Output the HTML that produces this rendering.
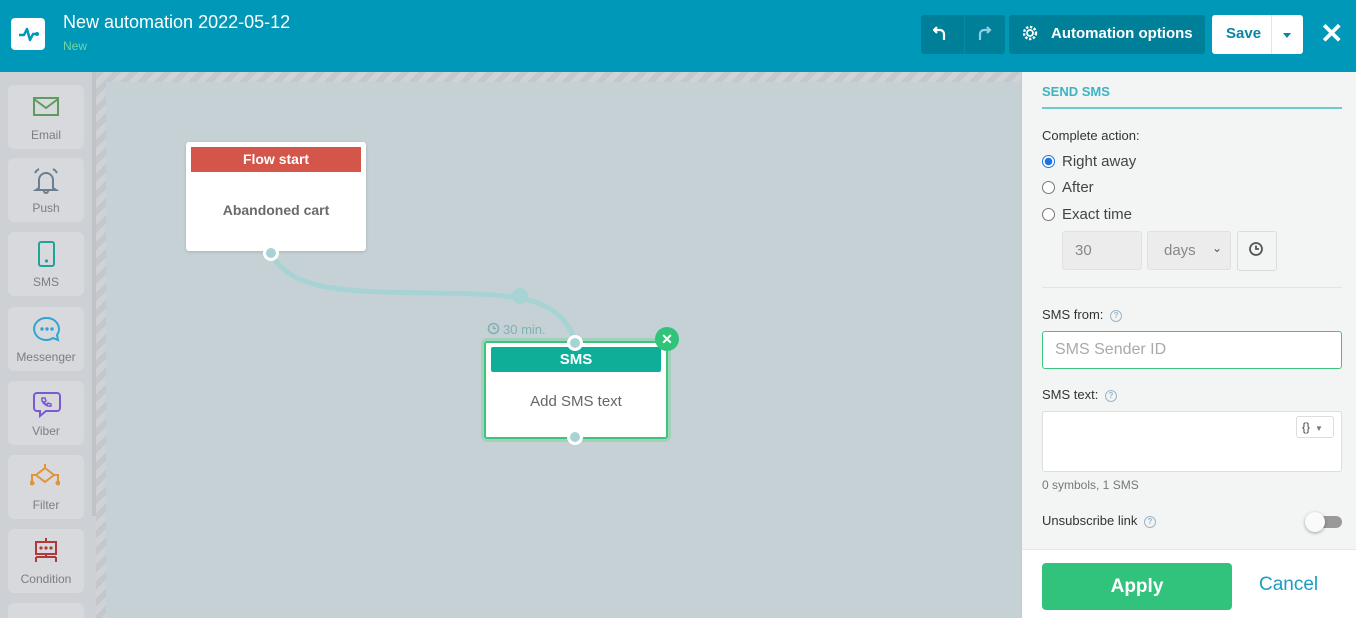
<!DOCTYPE html>
<html style="width:1356px;height:618px;overflow:hidden"><head><style>
*{box-sizing:border-box;margin:0;padding:0}
html,body{overflow:hidden}
body{width:1356px;height:618px;overflow:hidden;font-family:"Liberation Sans",sans-serif;background:#c6d1d6;position:relative}
.abs{position:absolute}
.hdr{left:0;top:0;width:1356px;height:72px;background:#0098b8}
.side{left:0;top:72px;width:96px;height:546px;background:#cdd1d5}
.item{position:absolute;left:8px;width:76px;height:64px;background:#d7d9dc;border-radius:6px;text-align:center;font-size:12px;color:#7a7f84}
.item svg{position:absolute;left:24px;top:8px}
.item span{position:absolute;left:0;right:0;top:43px}
.stripe{background:repeating-linear-gradient(135deg,#c4c8cc 0 6px,#d0d3d6 6px 12px)}
.card{background:#fff;border-radius:3px;box-shadow:0 1px 3px rgba(0,0,0,.15)}
.dot{width:16px;height:16px;border-radius:50%;background:#a8d3d4;border:3px solid #fff}
.panel{left:1021px;top:72px;width:335px;height:546px;background:#f3f5f4;border-left:1px solid #c3ccd1}
.lbl{font-size:13px;color:#333}
.radio{width:13px;height:13px;border-radius:50%;border:1px solid #777;background:#fff}
.q{display:inline-block;width:12px;height:12px;border:1.5px solid #9bb6c9;border-radius:50%;font-size:8px;color:#9bb6c9;text-align:center;line-height:9px;vertical-align:1px;margin-left:3px;font-weight:bold}
</style></head><body>
<div class="abs hdr"></div>
<div class="abs" style="left:11px;top:18px;width:34px;height:32px;background:#fff;border-radius:4px"></div>
<svg class="abs" style="left:11px;top:18px" width="34" height="32"><path d="M8 17h5l3-6 3 11 3-6h4" fill="none" stroke="#0098b8" stroke-width="2.5" stroke-linejoin="round"/><circle cx="26" cy="16" r="2" fill="#0098b8"/></svg>
<div class="abs" style="left:63px;top:12px;font-size:18px;color:#fff">New automation 2022-05-12</div>
<div class="abs" style="left:63px;top:39px;font-size:12px;color:#6fd69e">New</div>
<div class="abs" style="left:921px;top:15px;width:84px;height:39px;background:#007f99;border-radius:3px"></div>
<div class="abs" style="left:964px;top:15px;width:1px;height:39px;background:#0a8aa3"></div>
<svg class="abs" style="left:933px;top:25px" width="16" height="18"><path d="M4 2L1 5l3 3M1 5h6a4 4 0 0 1 4 4v6" fill="none" stroke="#fff" stroke-width="2.2"/></svg>
<svg class="abs" style="left:976px;top:25px" width="16" height="18"><path d="M11 2l3 3-3 3M14 5H8a4 4 0 0 0-4 4v6" fill="none" stroke="#8fd0de" stroke-width="2.2"/></svg>
<div class="abs" style="left:1009px;top:15px;width:196px;height:39px;background:#007f99;border-radius:3px"></div>
<svg class="abs" style="left:1022px;top:25px" width="16" height="16"><circle cx="8" cy="8" r="6" fill="none" stroke="#fff" stroke-width="2.4" stroke-dasharray="2.4 1.6"/><circle cx="8" cy="8" r="3" fill="none" stroke="#fff" stroke-width="1.8"/></svg>
<div class="abs" style="left:1051px;top:25px;font-size:15px;color:#fff;font-weight:bold">Automation options</div>
<div class="abs" style="left:1212px;top:15px;width:91px;height:39px;background:#fff;border-radius:3px"></div>
<div class="abs" style="left:1271px;top:15px;width:1px;height:39px;background:#e4e4e4"></div>
<div class="abs" style="left:1226px;top:25px;font-size:15px;color:#0a86a3;font-weight:bold">Save</div>
<div class="abs" style="left:1283px;top:33px;border:4px solid transparent;border-top:5px solid #0a86a3"></div>
<div class="abs" style="left:1320px;top:17px;font-size:28px;color:#fff;font-weight:bold">✕</div>

<div class="abs side"></div>
<div class="abs" style="left:92px;top:72px;width:4px;height:444px;background:#bfc3c7"></div>
<div class="abs stripe" style="left:96px;top:72px;width:10px;height:546px"></div>
<div class="abs stripe" style="left:96px;top:72px;width:925px;height:10px"></div>

<div class="item" style="top:85px"><svg width="28" height="28"><rect x="2" y="5" width="24" height="17" fill="none" stroke="#5d9c5f" stroke-width="2"/><path d="M2 6l12 9 12-9" fill="none" stroke="#5d9c5f" stroke-width="2"/></svg><span>Email</span></div>
<div class="item" style="top:158px"><svg width="28" height="30"><path d="M7 22V14a7 7 0 0 1 14 0v8l3 2H4z M12 25a2 2 0 0 0 4 0 M3 7a9 9 0 0 1 4-4 M25 7a9 9 0 0 0-4-4" fill="none" stroke="#6b7e90" stroke-width="2"/></svg><span>Push</span></div>
<div class="item" style="top:232px"><svg width="28" height="30"><rect x="7" y="2" width="15" height="24" rx="2" fill="none" stroke="#1fa39a" stroke-width="2"/><circle cx="14.5" cy="21" r="1.6" fill="#1fa39a"/></svg><span>SMS</span></div>
<div class="item" style="top:307px"><svg width="30" height="30"><path d="M15 3a12 11 0 1 0 6 20l5 2-1-5A12 11 0 0 0 15 3z" fill="none" stroke="#2ea6d2" stroke-width="2"/><circle cx="10" cy="14" r="1.7" fill="#2ea6d2"/><circle cx="15" cy="14" r="1.7" fill="#2ea6d2"/><circle cx="20" cy="14" r="1.7" fill="#2ea6d2"/></svg><span>Messenger</span></div>
<div class="item" style="top:381px"><svg width="30" height="30"><path d="M5 4h20a3 3 0 0 1 3 3v12a3 3 0 0 1-3 3H14l-6 5v-5H5a3 3 0 0 1-3-3V7a3 3 0 0 1 3-3z" fill="none" stroke="#7a5ad0" stroke-width="2"/><path d="M10 9l3 0 1 3-2 1a7 7 0 0 0 3 3l1-2 3 1v2c-5 1-10-4-9-8z" fill="none" stroke="#7a5ad0" stroke-width="1.5"/></svg><span>Viber</span></div>
<div class="item" style="top:455px"><svg width="30" height="30" style="left:22px"><path d="M15 1v4M15 5l-9 7 9 7 9-7zM6 12H2v6M24 12h4v6" fill="none" stroke="#e0953a" stroke-width="2"/><circle cx="2" cy="20" r="2.5" fill="#e0953a"/><circle cx="28" cy="20" r="2.5" fill="#e0953a"/></svg><span>Filter</span></div>
<div class="item" style="top:529px"><svg width="30" height="30"><rect x="4" y="5" width="20" height="12" fill="none" stroke="#b03a3a" stroke-width="2"/><path d="M14 1v4M14 17v3M4 20h20M4 20v5M24 20v5" fill="none" stroke="#b03a3a" stroke-width="2"/><circle cx="9" cy="11" r="1.6" fill="#b03a3a"/><circle cx="14" cy="11" r="1.6" fill="#b03a3a"/><circle cx="19" cy="11" r="1.6" fill="#b03a3a"/></svg><span>Condition</span></div>
<div class="item" style="top:603px;height:15px;border-radius:6px 6px 0 0"></div>

<svg class="abs" style="left:0;top:0" width="1021" height="618"><path d="M271 253C290 290 340 292 430 293S560 296 576 343" fill="none" stroke="#a8d3d4" stroke-width="5"/><circle cx="520" cy="296" r="8" fill="#a8d3d4"/></svg>

<div class="abs card" style="left:186px;top:142px;width:180px;height:109px"></div>
<div class="abs" style="left:191px;top:147px;width:170px;height:25px;background:#d4564b;color:#fff;font-weight:bold;font-size:14px;text-align:center;line-height:25px">Flow start</div>
<div class="abs" style="left:186px;top:202px;width:180px;text-align:center;font-size:14px;color:#6a6a6a;font-weight:bold">Abandoned cart</div>
<div class="abs dot" style="left:263px;top:245px"></div>

<svg class="abs" style="left:487px;top:322px" width="13" height="13"><circle cx="6.5" cy="6.5" r="5" fill="none" stroke="#7fb0b3" stroke-width="1.6"/><path d="M6.5 3.5v3h2.5" fill="none" stroke="#7fb0b3" stroke-width="1.5"/></svg>
<div class="abs" style="left:503px;top:322px;font-size:13px;color:#7fb0b3">30 min.</div>
<div class="abs" style="left:484px;top:341px;width:184px;height:98px;background:#fff;border:2px solid #3fc47c;border-radius:3px;box-shadow:0 0 0 3px rgba(120,210,160,.5)"></div>
<div class="abs" style="left:491px;top:347px;width:170px;height:25px;background:#0fae98;color:#fff;font-weight:bold;font-size:15px;text-align:center;line-height:25px;border-radius:2px">SMS</div>
<div class="abs" style="left:485px;top:393px;width:182px;text-align:center;font-size:15px;color:#666">Add SMS text</div>
<div class="abs dot" style="left:567px;top:335px"></div>
<div class="abs dot" style="left:567px;top:429px"></div>
<div class="abs" style="left:655px;top:327px;width:24px;height:24px;border-radius:50%;background:#31c37a;color:#fff;font-size:14px;text-align:center;line-height:24px;font-weight:bold">✕</div>

<div class="abs panel"></div>
<div class="abs" style="left:1042px;top:84px;font-size:13px;font-weight:bold;color:#3ab4c2">SEND SMS</div>
<div class="abs" style="left:1042px;top:107px;width:300px;height:2px;background:#6fcad0"></div>
<div class="abs lbl" style="left:1042px;top:128px">Complete action:</div>
<div class="abs radio" style="left:1042px;top:155px;border-color:#1a73e8;background:radial-gradient(#1a73e8 0 3.5px,#fff 4px)"></div>
<div class="abs" style="left:1062px;top:153px;font-size:15px;color:#444">Right away</div>
<div class="abs radio" style="left:1042px;top:181px"></div>
<div class="abs" style="left:1062px;top:179px;font-size:15px;color:#444">After</div>
<div class="abs radio" style="left:1042px;top:208px"></div>
<div class="abs" style="left:1062px;top:206px;font-size:15px;color:#444">Exact time</div>
<div class="abs" style="left:1062px;top:231px;width:80px;height:39px;background:#ececec;border:1px solid #e0e0e0;border-radius:3px;font-size:15px;color:#888;padding:10px 12px">30</div>
<div class="abs" style="left:1147px;top:231px;width:84px;height:39px;background:#ececec;border:1px solid #e0e0e0;border-radius:3px;font-size:15px;color:#888;padding:10px 16px">days<span style="position:absolute;right:8px;top:9px;font-size:12px;color:#555">⌄</span></div>
<div class="abs" style="left:1237px;top:231px;width:40px;height:40px;border:1px solid #d8dde0;border-radius:3px"></div>
<svg class="abs" style="left:1249px;top:242px" width="16" height="16"><circle cx="7" cy="7" r="6" fill="none" stroke="#555" stroke-width="1.8"/><path d="M7 3.5V7h3" fill="none" stroke="#555" stroke-width="1.8"/></svg>
<div class="abs" style="left:1042px;top:287px;width:300px;height:1px;background:#dfe4e5"></div>
<div class="abs lbl" style="left:1042px;top:307px">SMS from: <span class="q">?</span></div>
<div class="abs" style="left:1042px;top:331px;width:300px;height:38px;background:#fff;border:1.5px solid #3ec67f;border-radius:3px;font-size:16px;color:#aaa;padding:9px 12px">SMS Sender ID</div>
<div class="abs lbl" style="left:1042px;top:387px">SMS text: <span class="q">?</span></div>
<div class="abs" style="left:1042px;top:411px;width:300px;height:61px;background:#fff;border:1px solid #dbdfe0;border-radius:3px"></div>
<div class="abs" style="left:1296px;top:416px;width:38px;height:22px;border:1px solid #ddd;border-radius:3px;font-size:12px;color:#444;padding:3px 5px">{}<span style="font-size:8px;color:#777;margin-left:5px">▼</span></div>
<div class="abs" style="left:1042px;top:478px;font-size:12px;color:#777">0 symbols, 1 SMS</div>
<div class="abs lbl" style="left:1042px;top:513px">Unsubscribe link <span class="q">?</span></div>
<div class="abs" style="left:1310px;top:516px;width:32px;height:12px;background:#999;border-radius:6px"></div>
<div class="abs" style="left:1305px;top:512px;width:20px;height:20px;background:#fafafa;border-radius:50%;box-shadow:0 1px 3px rgba(0,0,0,.35)"></div>
<div class="abs" style="left:1022px;top:549px;width:334px;height:69px;background:#fff;border-top:1px solid #e4e8e8"></div>
<div class="abs" style="left:1042px;top:563px;width:190px;height:47px;background:#31c27b;border-radius:4px;color:#fff;font-weight:bold;font-size:19px;text-align:center;line-height:47px">Apply</div>
<div class="abs" style="left:1259px;top:574px;font-size:19px;color:#1a9dc4">Cancel</div>
</body></html>
